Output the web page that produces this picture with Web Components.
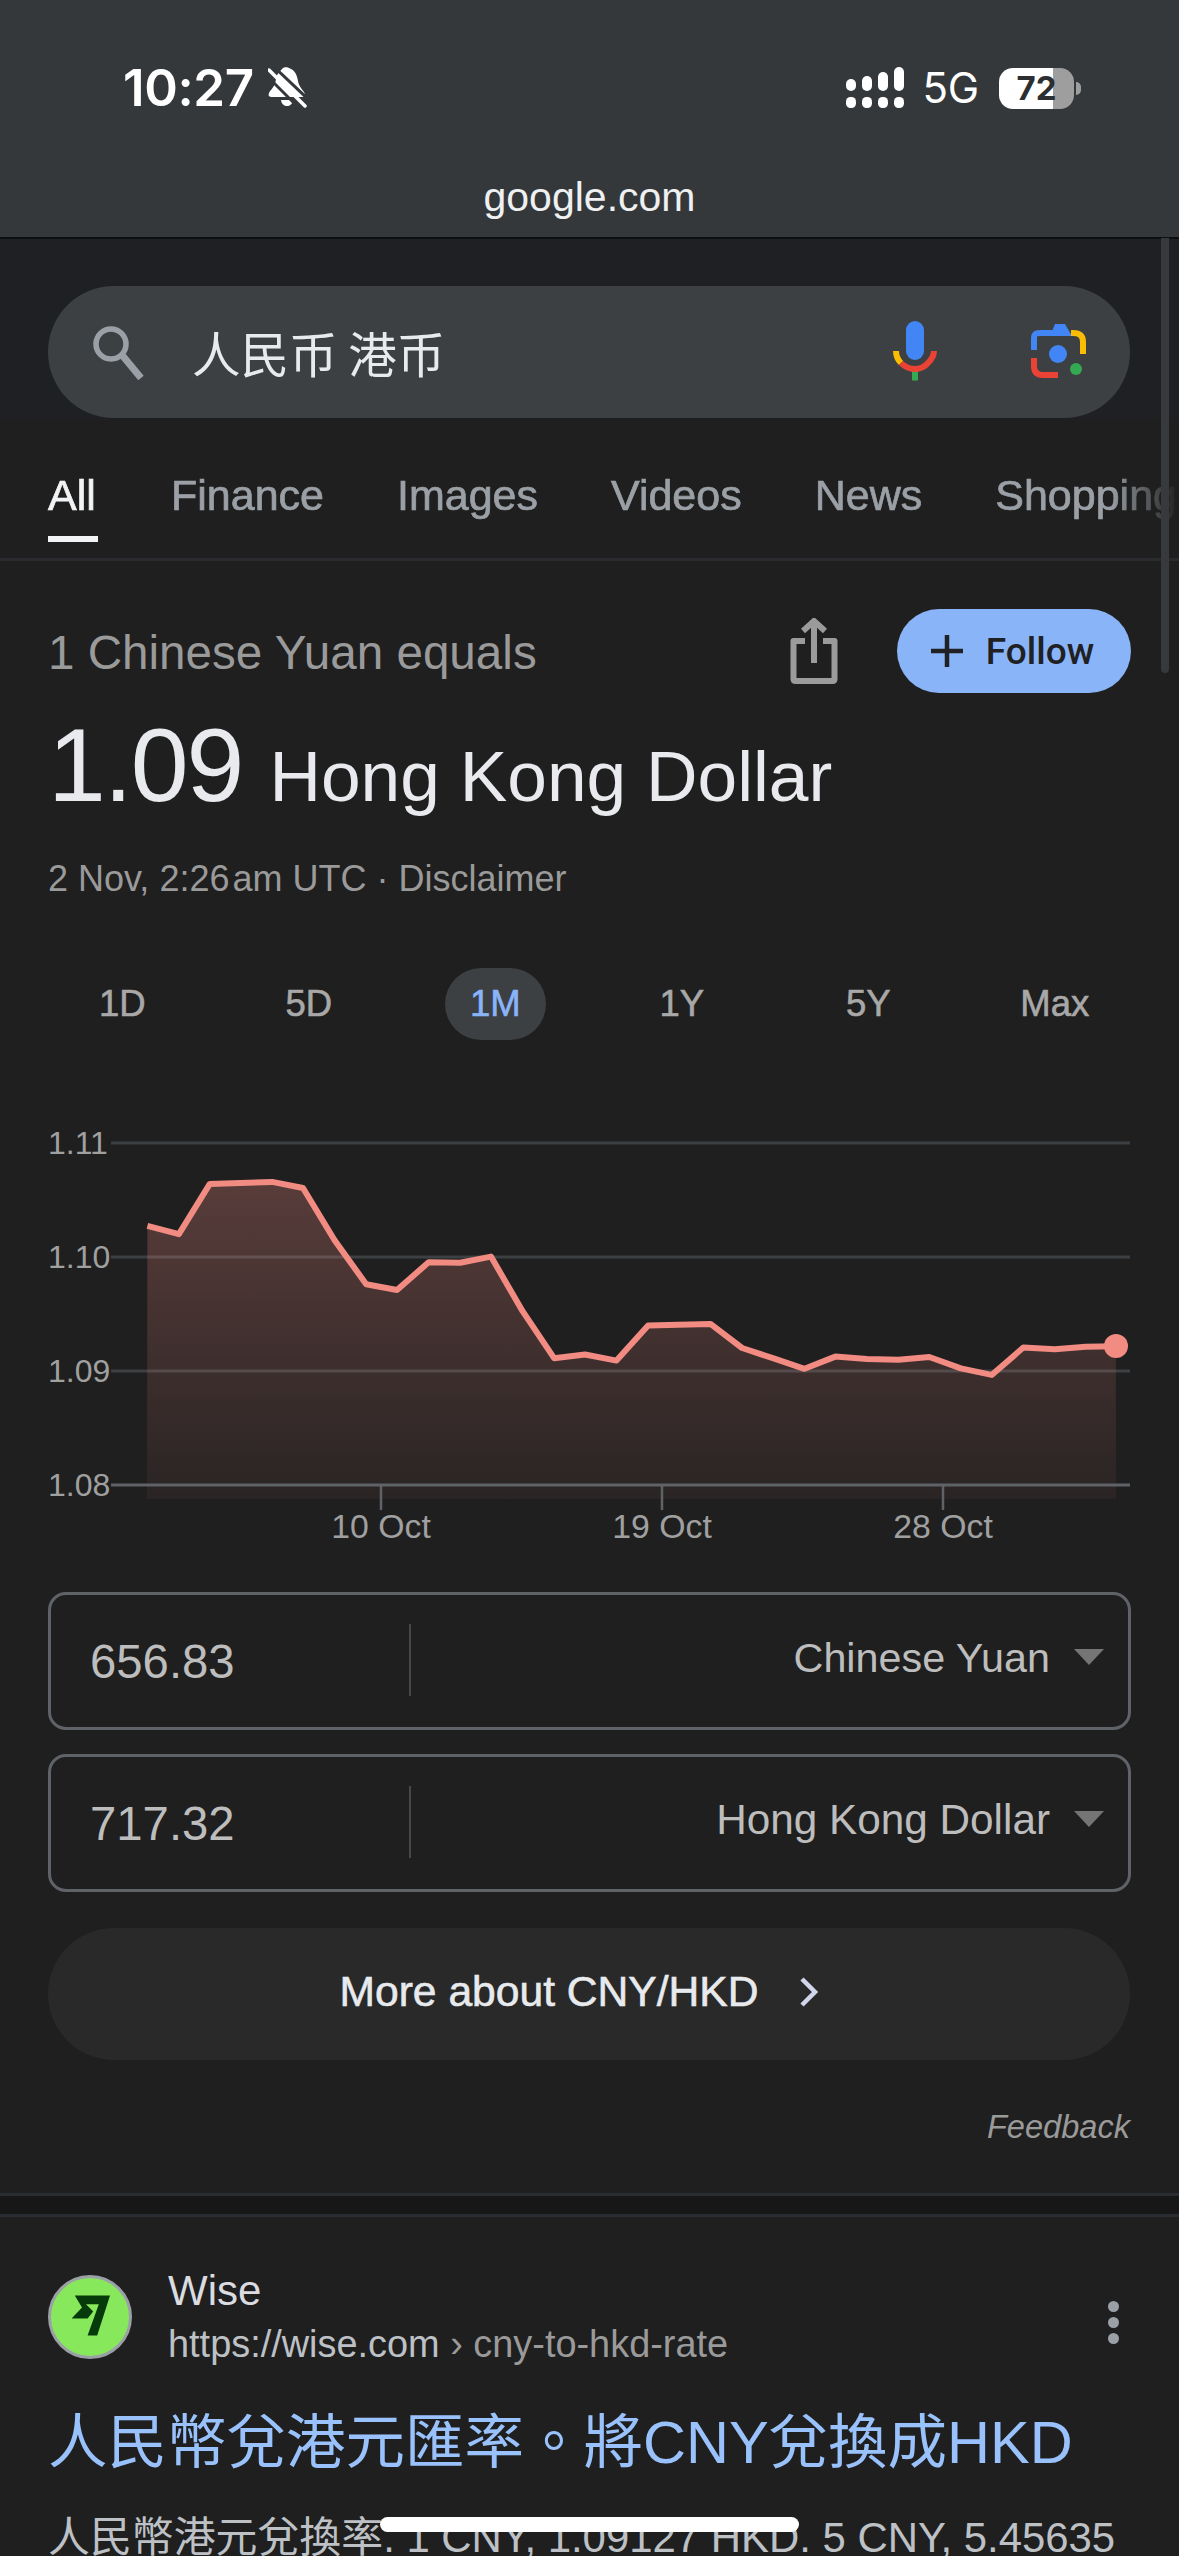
<!DOCTYPE html>
<html lang="en"><head><meta charset="utf-8"><title>人民币 港币</title>
<style>
html,body{margin:0;padding:0;background:#1f1f1f}
body{width:1179px;height:2556px;overflow:hidden;position:relative;font-family:"Liberation Sans","Noto Sans CJK TC",sans-serif;color:#e8eaed}
</style></head><body>
<top-bar></top-bar>
<search-box query="人民币 港币"></search-box>
<tab-row></tab-row>
<rate-header></rate-header>
<range-tabs></range-tabs>
<rate-chart></rate-chart>
<convert-row value="656.83" currency="Chinese Yuan" style="--cf:41.3px"></convert-row>
<convert-row value="717.32" currency="Hong Kong Dollar" style="--cf:42.3px;margin-top:24px"></convert-row>
<more-button>More about CNY/HKD</more-button>
<feedback-line></feedback-line>
<result-card></result-card>
<phone-overlay></phone-overlay>
<script>
function def(name,html,init){
  customElements.define(name,class extends HTMLElement{
    constructor(){super();this.attachShadow({mode:'open'}).innerHTML=typeof html==='function'?html(this):html;}
    connectedCallback(){if(init)init(this);}
  });
}
def('top-bar',`<style>
:host{display:block;height:237px;background:#35383b;border-bottom:2px solid #0d0e0f;box-sizing:content-box;font-family:Inter,sans-serif;color:#fff}
.st{display:flex;align-items:center;height:42px;padding:67px 98px 0 123px}
.time{font-size:51px;font-weight:600;line-height:42px;letter-spacing:-.4px}
.bell{margin-left:14px;display:block}
.sp{flex:1}
.g{font-size:42px;font-weight:400;margin:0 20px 0 19px;line-height:42px;letter-spacing:-.2px}
.batt{width:75px;height:41px;border-radius:14px;position:relative;overflow:hidden;background:linear-gradient(90deg,#fff 72%,#9e9e9e 72%);display:flex;align-items:center;justify-content:center;color:#2c2f32;font-size:33px;font-weight:700}
.nub{width:5px;height:13px;background:#9e9e9e;border-radius:0 7px 7px 0;margin-left:2px}
.url{text-align:center;font-size:41px;font-family:"Liberation Sans",Arial,sans-serif;line-height:48px;margin-top:64px;color:#eef0f1}
</style>
<div class="st"><span class="time">10:27</span>
<svg class="bell" width="39" height="44" viewBox="0 -1 39 44"><path fill="#fff" d="M21 1C27 3 29 8 30 14C31 21 37 24 37 28C37 30 35 30 33 30L5 30C1 30 0 29 1 26C3 22 7 20 8 12C8 8 12 4 15 1C16 0 20 0 21 1Z"/><path fill="#fff" d="M13 33H25C24 41 14 41 13 33Z"/><path stroke="#35383b" stroke-width="3" d="M4 -2L42 34"/><path stroke="#35383b" stroke-width="3" d="M-3 7L33 43"/><path stroke="#fff" stroke-width="3.5" stroke-linecap="round" d="M1 3L37 39"/></svg>
<span class="sp"></span>
<svg width="58" height="42" viewBox="0 0 58 42" fill="#fff"><rect x="0" y="12" width="10" height="12" rx="5"/><rect x="16" y="9" width="10" height="15" rx="5"/><rect x="32" y="5" width="10" height="19" rx="5"/><rect x="48" y="0" width="10" height="24" rx="5"/><rect x="0" y="30" width="10" height="11" rx="4.5"/><rect x="16" y="30" width="10" height="11" rx="4.5"/><rect x="32" y="30" width="10" height="11" rx="4.5"/><rect x="48" y="30" width="10" height="11" rx="4.5"/></svg>
<span class="g">5G</span><span class="batt">72</span><span class="nub"></span></div>
<div class="url">google.com</div>`);
def('search-box',h=>`<style>
:host{display:block;padding:47px 49px 0 48px;background:#1f2023}
.b{height:132px;border-radius:66px;background:#3c4043;display:flex;align-items:center;padding-left:44px;padding-right:43px}
.q{font:400 48.500px "Noto Sans CJK SC","Noto Sans CJK TC",sans-serif;color:#e8eaed;margin-left:46px;flex:1;line-height:60px;white-space:pre}
svg{display:block}
</style><div class="b">
<svg width="54" height="56" viewBox="0 0 54 56" fill="none" stroke="#9aa0a6"><circle cx="19" cy="20" r="15" stroke-width="5.500"/><path d="M30 31L49 54" stroke-width="7"/></svg>
<span class="q">${h.getAttribute('query')}</span>
<svg width="44" height="62" viewBox="0 0 44 62" fill="none"><rect x="13" y="0" width="18" height="39" rx="9" fill="#4285f4"/><path d="M19 59.500H25V48H19Z" fill="#34a853"/><path d="M3 30C3 35 5 39 8 42" stroke="#fbbc04" stroke-width="6"/><path d="M8 42C16 50 28 50 35 42C39 38 41 35 41 30" stroke="#ea4335" stroke-width="6"/></svg>
<svg style="margin-left:94px" width="56" height="56" viewBox="0 0 56 56" fill="none" stroke-width="6"><path d="M3 26V14C3 9 6 9 10 9H22" stroke="#4285f4"/><path fill="#4285f4" stroke="none" d="M19 12L24 0H34L41 12Z"/><path d="M40 9H42C49 9 52 12 52 18V30" stroke="#fbbc04"/><path d="M3 34V42C3 49 7 51 12 51H27" stroke="#ea4335"/><circle cx="27" cy="30" r="9" fill="#4285f4" stroke="none"/><circle cx="45" cy="45" r="6" fill="#34a853" stroke="none"/></svg>
</div>`);
def('tab-row',`<style>
:host{display:block;height:143px;box-sizing:border-box;border-bottom:3px solid #292b2e;position:relative;overflow:hidden}
.r{display:flex;gap:73px;padding:50px 0 0 48px;font-size:43px;-webkit-text-stroke:.7px currentColor;line-height:54px;color:#9aa0a6;white-space:nowrap;width:1179px;box-sizing:border-box;overflow:hidden;-webkit-mask-image:linear-gradient(90deg,#000 1110px,transparent 1179px);mask-image:linear-gradient(90deg,#000 1110px,transparent 1179px);height:140px}
.a{color:#f1f3f4;position:relative;min-width:50px}
.a::after{content:"";position:absolute;left:0;right:0;top:68px;height:6px;background:#f1f3f4}
</style><div class="r"><span class="a">All</span><span>Finance</span><span>Images</span><span>Videos</span><span>News</span><span>Shopping</span></div>`);
def('rate-header',`<style>
:host{display:block;padding:48px 48px 0}
.r1{display:flex;align-items:center;height:84px}
.t{flex:1;font-size:47.600px;color:#9a9a9a;line-height:60px;padding-top:3px}
.f{width:234px;height:84px;border-radius:42px;background:#8ab4f8;color:#202124;display:flex;align-items:center;justify-content:center;gap:23px;font:500 37px Roboto,sans-serif;margin-left:59px;padding-right:3px;box-sizing:border-box}
svg{display:block}
.r2{display:flex;align-items:baseline;margin-top:13px;line-height:118px;color:#e8eaed}
.n{font-size:104px;letter-spacing:-2px}
.u{font-size:71.300px;margin-left:27px}
.d{font-size:36px;color:#9a9a9a;line-height:46px;margin-top:21px}
.d i{font-style:normal;margin-left:3px}
</style>
<div class="r1"><span class="t">1 Chinese Yuan equals</span>
<svg width="48" height="66" viewBox="0 0 48 66" fill="none" stroke="#9b9b9b"><path d="M15 23H3.500V61C3.500 62.500 4 63 5.500 63H42.500C44 63 44.500 62.500 44.500 61V23H33" stroke-width="6" stroke-linejoin="round"/><path d="M24 45V4" stroke-width="6"/><path d="M13 13L24 3L35 13" stroke-width="6"/></svg>
<span class="f"><svg width="32" height="32" viewBox="0 0 32 32" stroke="#202124" stroke-width="4.500"><path d="M16 0V32M0 16H32"/></svg><span>Follow</span></span></div>
<div class="r2"><span class="n">1.09</span><span class="u">Hong Kong Dollar</span></div>
<div class="d">2 Nov, 2:26<i>am</i> UTC · Disclaimer</div>`);
def('range-tabs',`<style>
:host{display:grid;grid-template-columns:repeat(6,186.5px);margin:66px 0 0 29px;height:72px}
span{display:flex;align-items:center;justify-content:center;font-size:36.500px;-webkit-text-stroke:.6px currentColor;color:#a8a8a8}
b{font-weight:400;color:#8ab4f8;background:#3c4043;width:101px;height:72px;border-radius:36px;display:flex;align-items:center;justify-content:center}
</style><span>1D</span><span>5D</span><span><b>1M</b></span><span>1Y</span><span>5Y</span><span>Max</span>`);
const pts=[[196,703],[238,723],[279,600],[320,598],[362,595],[403,610],[445,738],[487,846],[528,860],[570,792],[612,793],[653,778],[695,912],[737,1027],[778,1018],[820,1033],[862,947],[903,945],[945,943],[987,1002],[1028,1027],[1070,1053],[1111,1023],[1153,1029],[1195,1031],[1236,1024],[1278,1052],[1319,1068],[1361,1001],[1403,1005],[1444,999],[1484,998]].map(([x,y])=>[(x/1.33).toFixed(1),(940+y/2.45).toFixed(1)]);
const line=pts.map((p,i)=>(i?'L':'M')+p[0]+' '+p[1]).join('');
def('rate-chart',`<style>
:host{display:block;height:552px}
svg{display:block}
text{font-family:"Liberation Sans",sans-serif;font-size:32px;fill:#a0a0a0}
.x{font-size:33.800px}
</style>
<svg width="1179" height="552" viewBox="0 1041 1179 552">
<defs><linearGradient id="g" x1="0" y1="0" x2="0" y2="1"><stop offset="0" stop-color="#f28b82" stop-opacity=".27"/><stop offset="1" stop-color="#f28b82" stop-opacity=".05"/></linearGradient></defs>
<g stroke-width="3"><path d="M111 1144H1130" stroke="#3c4043"/><path d="M111 1258H1130" stroke="#3c4043"/><path d="M111 1372H1130" stroke="#3c4043"/></g>
<path d="${line}L1116 1500L147 1500Z" fill="url(#g)"/>
<path d="M111 1486H1130" stroke="#5f6368" stroke-width="3"/>
<path d="M381 1486V1511M662 1486V1511M943 1486V1511" stroke="#5f6368" stroke-width="2.500"/>
<path d="${line}" fill="none" stroke="#f28b82" stroke-width="6" stroke-linejoin="round"/>
<circle cx="1116" cy="1347" r="12" fill="#f28b82"/>
<text x="48" y="1155">1.11</text><text x="48" y="1269">1.10</text><text x="48" y="1383">1.09</text><text x="48" y="1497">1.08</text>
<g text-anchor="middle"><text class="x" x="381" y="1539">10 Oct</text><text class="x" x="662" y="1539">19 Oct</text><text class="x" x="943" y="1539">28 Oct</text></g>
</svg>`);
def('convert-row',h=>`<style>
:host{display:block;margin:0 48px 0 48px}
.b{height:138px;box-sizing:border-box;border:3px solid #5f6368;border-radius:18px;display:flex;align-items:center}
.v{width:358px;padding-left:39px;box-sizing:border-box;font-size:47.300px;color:#bdbdbd;padding-top:1px}
.s{width:2px;height:72px;background:#45484b;margin-top:-3px}
.c{flex:1;text-align:right;font-size:var(--cf,41.500px);color:#bdbdbd;margin-right:24px;padding-bottom:6px}
.a{width:0;height:0;border:15px solid transparent;border-top:16px solid #757575;border-bottom:0;margin-right:24px;margin-bottom:8px}
</style><div class="b"><span class="v">${h.getAttribute('value')}</span><span class="s"></span><span class="c">${h.getAttribute('currency')}</span><span class="a"></span></div>`);
def('more-button',`<style>
:host{display:flex;align-items:center;justify-content:center;height:132px;box-sizing:border-box;margin:36px 49px 0 48px;padding:0 20px 5px 0;border-radius:66px;background:#292929;color:#e8eaed;font-size:42.600px;-webkit-text-stroke:.6px currentColor;gap:40px}
svg{display:block}
</style><slot></slot><svg width="20" height="30" viewBox="0 0 20 30" fill="none" stroke="#d2d6ec" stroke-width="4.500"><path d="M3 2L16 15L3 28"/></svg>`);
def('feedback-line',`<style>
:host{display:block;text-align:right;padding:45px 49px 0 0;font-style:italic;font-size:32.600px;line-height:44px;color:#9a9a9a}
</style>Feedback`);
def('result-card',`<style>
:host{display:block;margin-top:44px}
.sep{height:18px;background:#171717;border-top:3px solid #292c30;border-bottom:3px solid #292c30}
.h{display:flex;padding:55px 48px 0 48px;align-items:center;height:90px}
.l{width:84px;height:84px;border-radius:50%;box-sizing:border-box;border:3px solid #9aa0a6;background:#88e85c;display:flex;align-items:center;justify-content:center}
.m{flex:1;margin-left:36px}
.n{font-size:42px;line-height:50px;color:#dadce0}
.u{font-size:37.900px;line-height:50px;margin-top:3px;color:#9a9a9a;white-space:nowrap}
.u b{font-weight:400;color:#bdc1c6}
.d{width:11px;display:flex;flex-direction:column;gap:5px;margin-right:12px;margin-top:10px}
.d i{width:11px;height:11px;border-radius:50%;background:#9aa0a6}
.t{margin:39px 0 0 48px;font:400 59.500px/84px "Liberation Sans","Noto Sans CJK TC",sans-serif;color:#99c1fb;white-space:nowrap}
.p{margin:25px 0 0 48px;font:400 41.900px/56px "Liberation Sans","Noto Sans CJK TC",sans-serif;color:#bdc1c6;white-space:nowrap}
svg{display:block}
</style><div class="sep"></div>
<div class="h"><span class="l"><svg width="40" height="44" viewBox="0 0 50 54"><path fill="#073a0a" d="M6 0H50L34 50H22L36 11H20L29 20L22 29H2L15 15Z"/></svg></span>
<div class="m"><div class="n">Wise</div><div class="u"><b>https://wise.com</b> › cny-to-hkd-rate</div></div>
<div class="d"><i></i><i></i><i></i></div></div>
<div class="t">人民幣兌港元匯率。將CNY兌換成HKD</div>
<div class="p">人民幣港元兌換率. 1 CNY, 1.09127 HKD. 5 CNY, 5.45635</div>`);
def('phone-overlay',`<style>
:host{display:block}
.home{position:absolute;left:380px;top:2517px;width:419px;height:15px;border-radius:8px;background:#fff}
.sb{position:absolute;left:1161px;top:238px;width:8px;height:435px;border-radius:0 0 4px 4px;background:#37393c}
</style><div class="sb"></div><div class="home"></div>`);
</script>
</body></html>
